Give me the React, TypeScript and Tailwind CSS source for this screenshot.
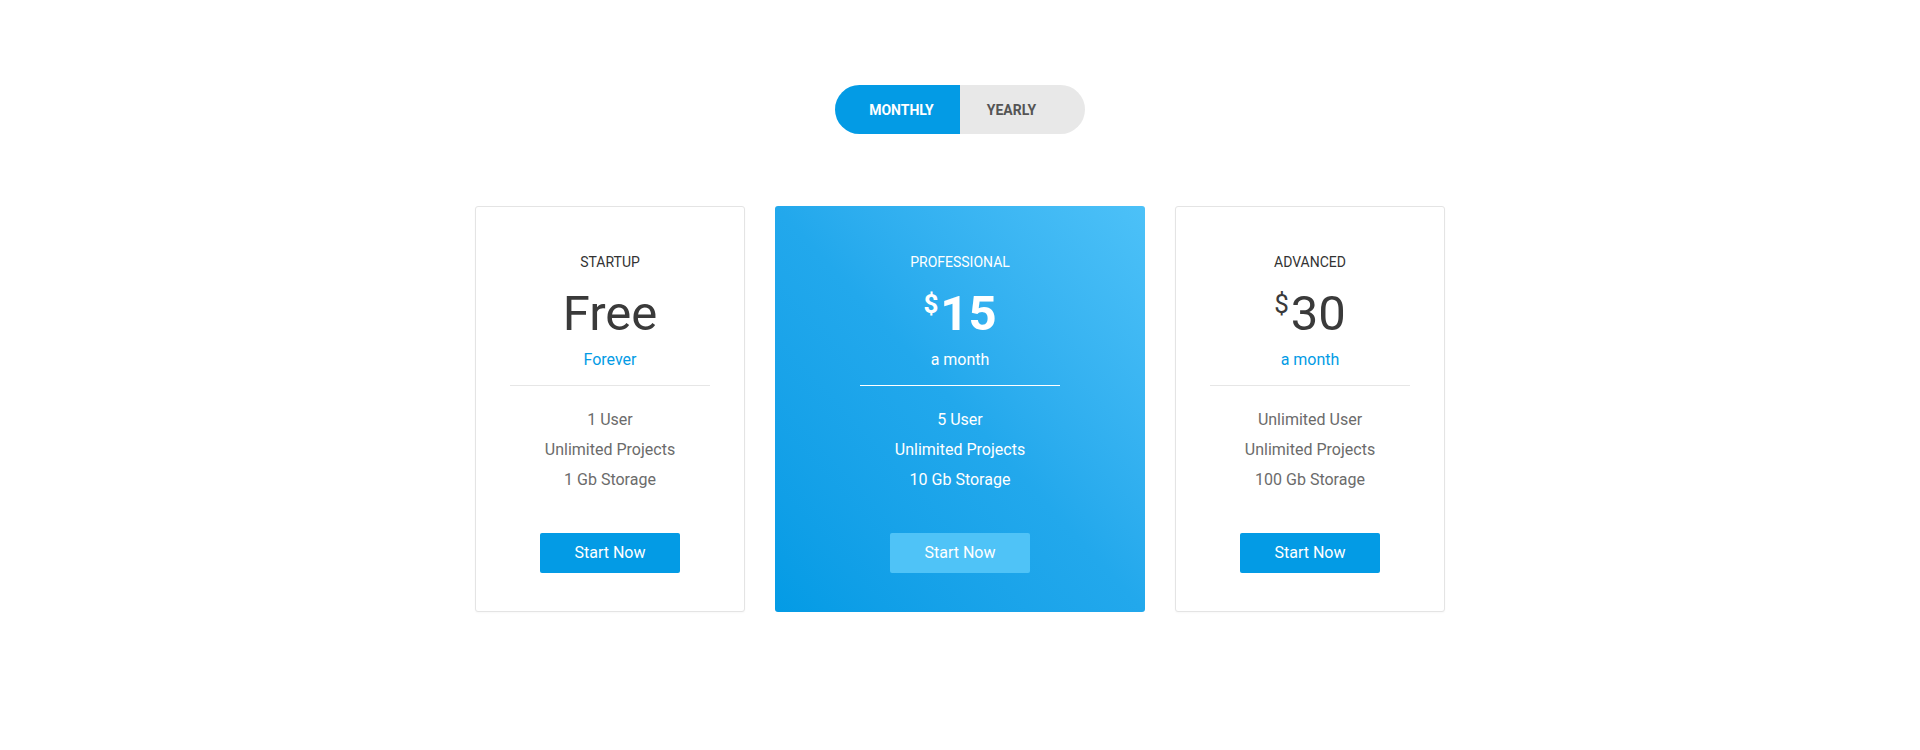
import React from "react";

type Plan = {
  title: string;
  price: string;
  dollar: boolean;
  period: string;
  features: string[];
  featured?: boolean;
};

const plans: Plan[] = [
  { title: "STARTUP", price: "Free", dollar: false, period: "Forever", features: ["1 User", "Unlimited Projects", "1 Gb Storage"] },
  { title: "PROFESSIONAL", price: "15", dollar: true, period: "a month", features: ["5 User", "Unlimited Projects", "10 Gb Storage"], featured: true },
  { title: "ADVANCED", price: "30", dollar: true, period: "a month", features: ["Unlimited User", "Unlimited Projects", "100 Gb Storage"] },
];

function Card({ plan }: { plan: Plan }) {
  const f = plan.featured;
  return (
    <div
      className={
        f
          ? "w-[370px] h-[406px] rounded-[3px] bg-gradient-to-tr from-[#039be5] via-[#22a8ec] to-[#4cc1f8] flex flex-col items-center pt-[46px] text-white"
          : "w-[270px] h-[406px] rounded-[3px] border border-[#e4e4e4] bg-white flex flex-col items-center pt-[45px] shadow-[0_1px_2px_rgba(0,0,0,0.03)]"
      }
    >
      <div className={"text-[14px] leading-[20px] " + (f ? "text-white" : "text-[#333333]")}>{plan.title}</div>
      <div className={"mt-[18px] flex items-start justify-center " + (f ? "text-white font-bold" : "text-[#3a3a3a]")}>
        {plan.dollar && <span className="text-[26px] leading-[26px] mt-[1px] mr-[2px]">$</span>}
        <span className="text-[49px] leading-[48px]">{plan.price}</span>
      </div>
      <div className={"mt-[10px] text-[16px] leading-[24px] " + (f ? "text-white" : "text-[#039be5]")}>{plan.period}</div>
      <div className={"mt-[13px] w-[200px] h-px " + (f ? "bg-white" : "bg-[#e6e6e6]")} />
      <div className="mt-[19px] flex flex-col items-center">
        {plan.features.map((x) => (
          <div key={x} className={"text-[16px] leading-[30px] " + (f ? "text-white" : "text-[#6b6b6b]")}>{x}</div>
        ))}
      </div>
      <button
        className={
          "mt-[38px] w-[140px] h-[40px] rounded-[2px] text-white text-[16px] " +
          (f ? "bg-[#4fc3f7]" : "bg-[#039be5]")
        }
      >
        Start Now
      </button>
    </div>
  );
}

export default function App() {
  return (
    <div className="w-full h-[750px] bg-white flex flex-col items-center pt-[85px]" style={{ fontFamily: "Roboto, 'Liberation Sans', sans-serif" }}>
      <div className="flex w-[250px] h-[49px] rounded-full overflow-hidden">
        <div className="w-[125px] h-full bg-[#039be5] text-white text-[14px] font-bold flex items-center justify-center pl-[8px] pt-[2px]">MONTHLY</div>
        <div className="w-[125px] h-full bg-[#e8e8e8] text-[#555555] text-[14px] font-bold flex items-center justify-center pr-[22px] pt-[2px]">YEARLY</div>
      </div>
      <div className="mt-[72px] flex gap-[30px]">
        {plans.map((p) => (
          <Card key={p.title} plan={p} />
        ))}
      </div>
    </div>
  );
}
